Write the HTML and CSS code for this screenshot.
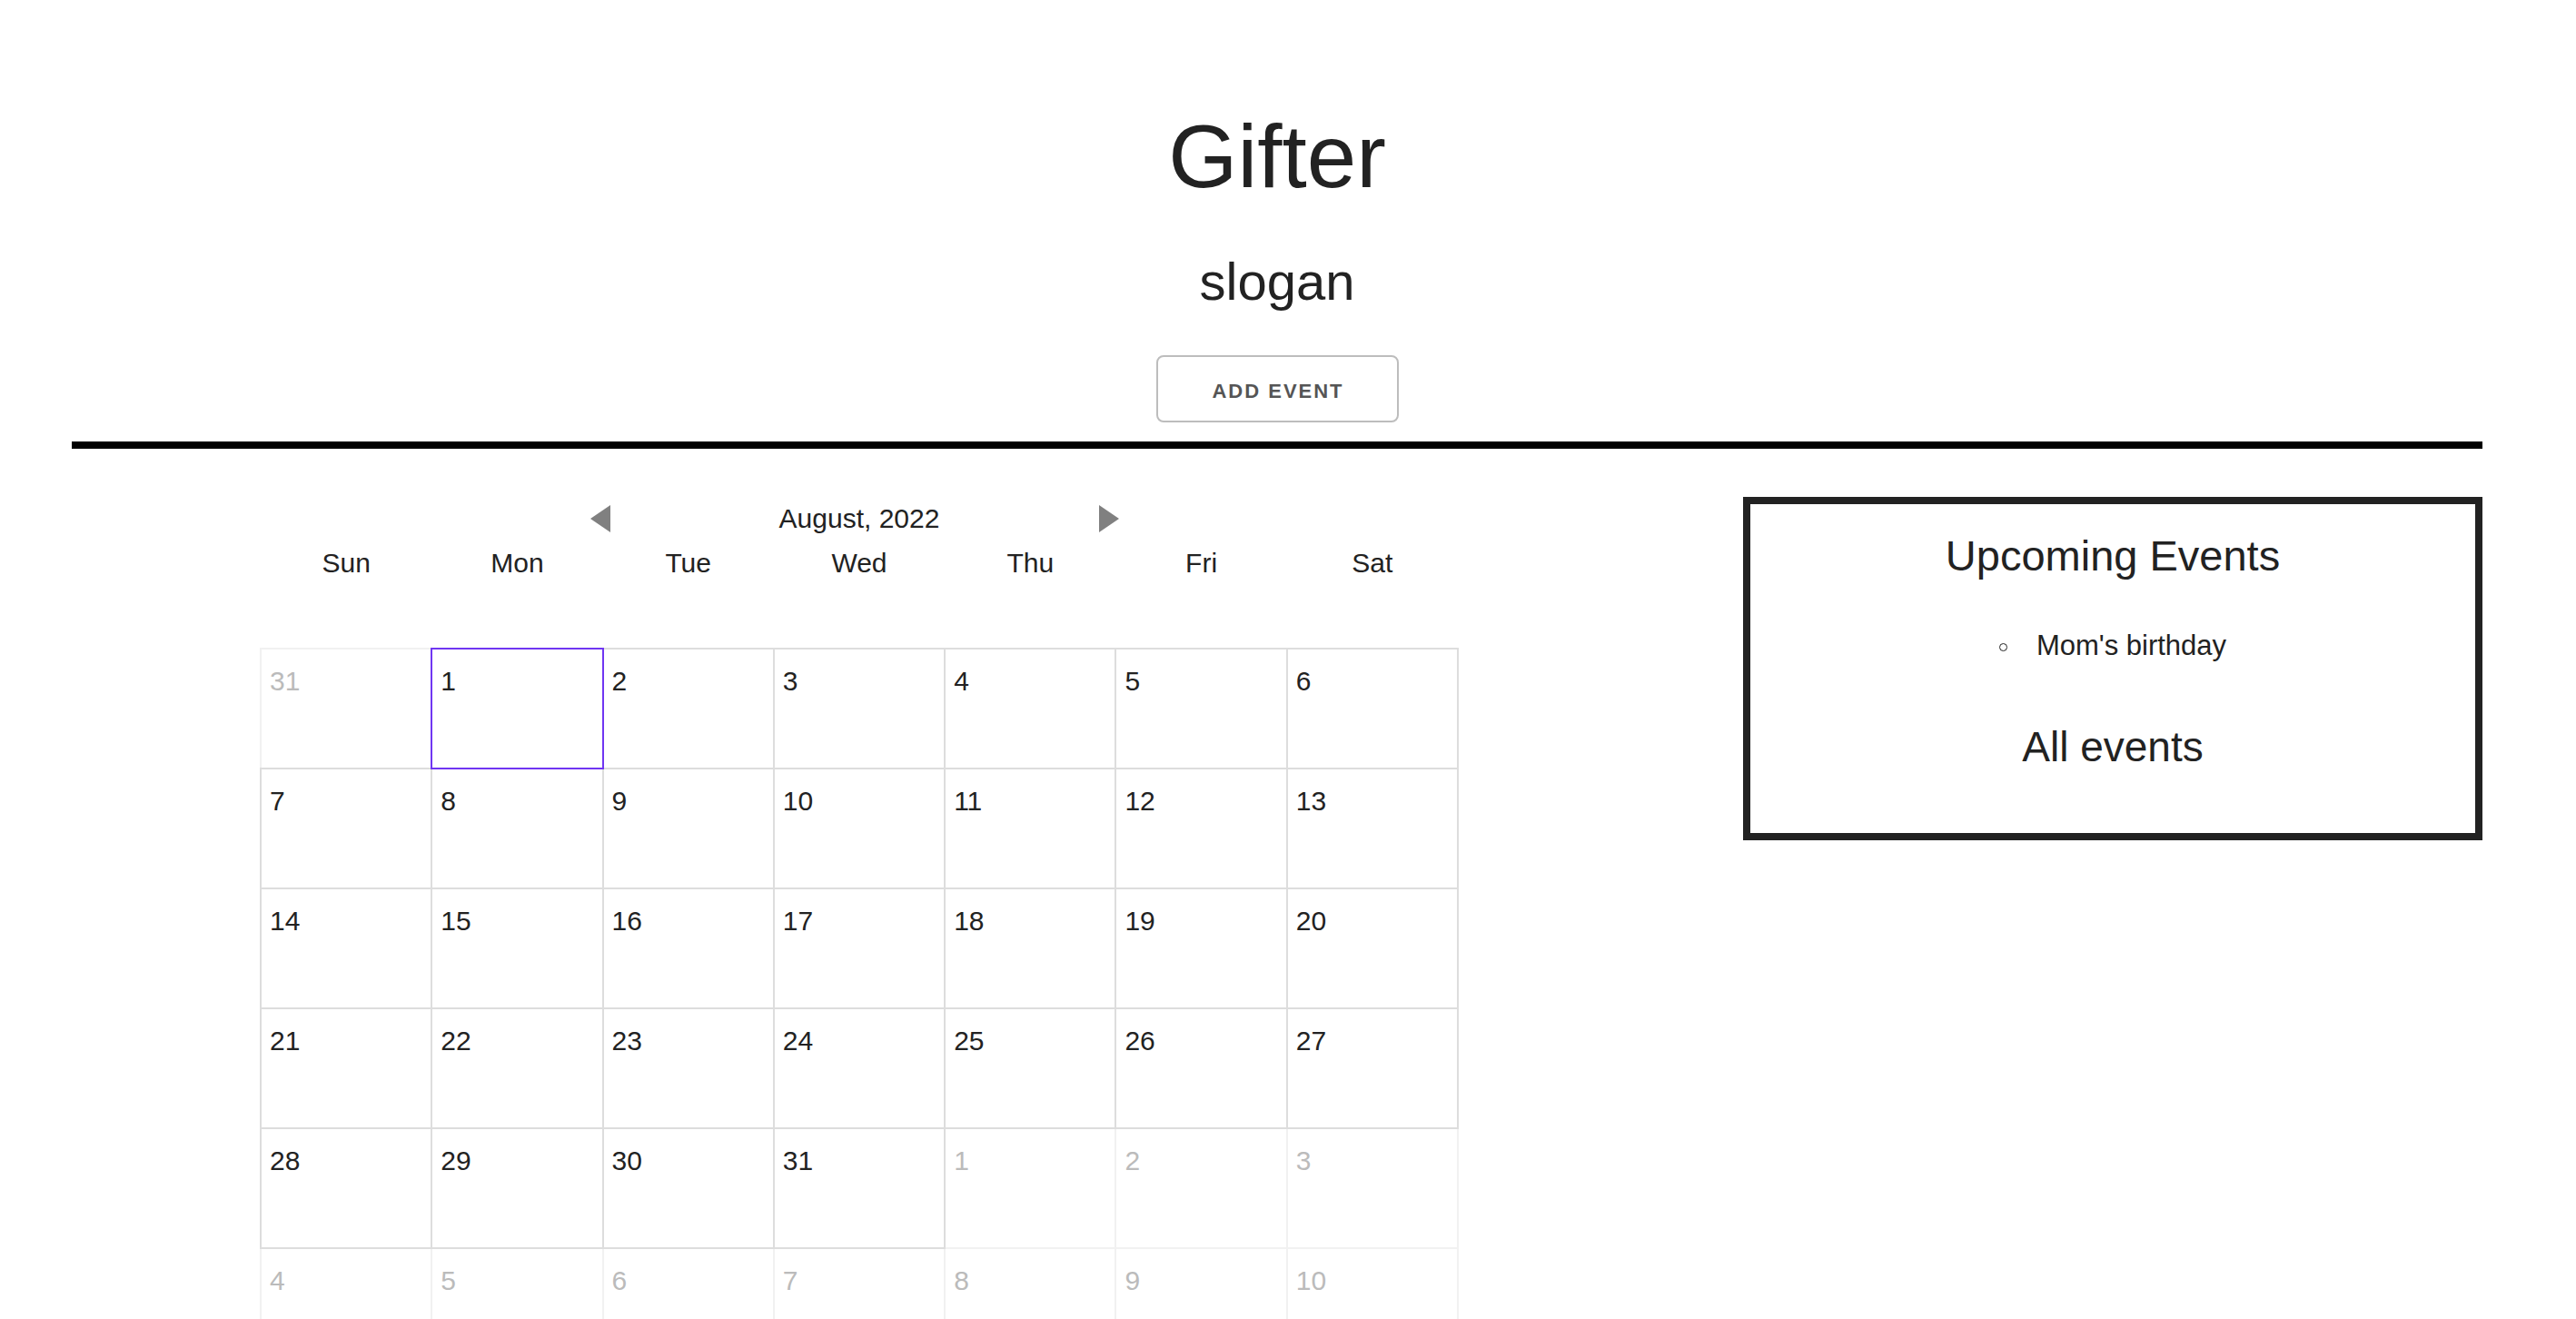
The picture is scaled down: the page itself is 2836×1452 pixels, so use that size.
FILE: index.html
```html
<!DOCTYPE html>
<html lang="en">
<head>
<meta charset="utf-8">
<title>Gifter</title>
<link rel="stylesheet" href="styles.css">
</head>
<body>
<div class="page">
  <header class="header">
    <h1 class="title">Gifter</h1>
    <h2 class="slogan">slogan</h2>
    <button class="add-btn" type="button">ADD EVENT</button>
  </header>
  <div class="rule"></div>
  <main class="main">
    <section class="calendar">
      <div class="cal-nav">
        <svg class="arrow" width="22" height="30" viewBox="0 0 22 30"><polygon points="22,0 22,30 0,15"/></svg>
        <span class="month">August, 2022</span>
        <svg class="arrow" width="22" height="30" viewBox="0 0 22 30"><polygon points="0,0 22,15 0,30"/></svg>
      </div>
      <div class="weekdays">
        <div>Sun</div><div>Mon</div><div>Tue</div><div>Wed</div><div>Thu</div><div>Fri</div><div>Sat</div>
      </div>
      <div class="grid">
        <div class="cell out">31</div>
        <div class="cell in selected">1</div>
        <div class="cell in">2</div>
        <div class="cell in">3</div>
        <div class="cell in">4</div>
        <div class="cell in">5</div>
        <div class="cell in">6</div>

        <div class="cell in">7</div>
        <div class="cell in">8</div>
        <div class="cell in">9</div>
        <div class="cell in">10</div>
        <div class="cell in">11</div>
        <div class="cell in">12</div>
        <div class="cell in">13</div>

        <div class="cell in">14</div>
        <div class="cell in">15</div>
        <div class="cell in">16</div>
        <div class="cell in">17</div>
        <div class="cell in">18</div>
        <div class="cell in">19</div>
        <div class="cell in">20</div>

        <div class="cell in">21</div>
        <div class="cell in">22</div>
        <div class="cell in">23</div>
        <div class="cell in">24</div>
        <div class="cell in">25</div>
        <div class="cell in">26</div>
        <div class="cell in">27</div>

        <div class="cell in">28</div>
        <div class="cell in">29</div>
        <div class="cell in">30</div>
        <div class="cell in">31</div>
        <div class="cell out">1</div>
        <div class="cell out">2</div>
        <div class="cell out">3</div>

        <div class="cell out">4</div>
        <div class="cell out">5</div>
        <div class="cell out">6</div>
        <div class="cell out">7</div>
        <div class="cell out">8</div>
        <div class="cell out">9</div>
        <div class="cell out">10</div>
      </div>
    </section>
    <aside class="events">
      <h2 class="events-title">Upcoming Events</h2>
      <ul class="events-list">
        <li class="event-item"><span class="bullet"></span><span>Mom's birthday</span></li>
      </ul>
      <h3 class="all-events">All events</h3>
    </aside>
  </main>
</div>
</body>
</html>
```

FILE: styles.css
```css
html, body {
  margin: 0;
  padding: 0;
  background: #ffffff;
}

body {
  font-family: "Liberation Sans", Arial, Helvetica, sans-serif;
  color: #222222;
}

.page {
  padding: 0 103px 0 79px;
  height: 1452px;
  overflow: hidden;
  box-sizing: border-box;
}

/* ---------- header ---------- */
.header {
  display: flex;
  flex-direction: column;
  align-items: center;
  padding-top: 114px;
}

.title {
  margin: 0;
  font-size: 98px;
  line-height: 116px;
  font-weight: 400;
  color: #222222;
}

.slogan {
  margin: 45px 0 0;
  font-size: 58px;
  line-height: 70px;
  font-weight: 400;
  color: #222222;
}

.add-btn {
  margin-top: 46px;
  width: 267px;
  height: 74px;
  box-sizing: border-box;
  padding: 25px 0 19px;
  border: 2px solid #bdbdbd;
  border-radius: 8px;
  background: #ffffff;
  font-family: "Liberation Sans", Arial, Helvetica, sans-serif;
  font-size: 22px;
  line-height: 26px;
  font-weight: 700;
  letter-spacing: 2px;
  color: #555555;
  text-indent: 2px;
}

.rule {
  margin-top: 21px;
  height: 8px;
  background: #000000;
}

/* ---------- main ---------- */
.main {
  display: flex;
  justify-content: space-between;
  align-items: flex-start;
}

.calendar {
  margin-left: 208px;
  width: 1318px;
}

.cal-nav {
  margin: 62px 0 0 363px;
  width: 582px;
  height: 30px;
  display: flex;
  justify-content: space-between;
  align-items: center;
}

.arrow {
  display: block;
  fill: #808080;
}

.month {
  padding-left: 10px;
  font-size: 30px;
  line-height: 30px;
  color: #222222;
}

.weekdays {
  margin-top: 17px;
  display: grid;
  grid-template-columns: repeat(7, 1fr);
  font-size: 30px;
  line-height: 34px;
  text-align: center;
  color: #222222;
}

.grid {
  margin-top: 77px;
  display: grid;
  grid-template-columns: repeat(7, 1fr);
  grid-auto-rows: 132px;
}

.cell {
  margin: -1px;
  border: 2px solid #f1f1f1;
  padding: 18px 9px;
  font-size: 30px;
  line-height: 34px;
  color: #bbbbbb;
}

.cell.in {
  position: relative;
  z-index: 1;
  border-color: #dddddd;
  color: #222222;
}

.cell.selected {
  z-index: 2;
  border-color: #7036f2;
}

/* ---------- events panel ---------- */
.events {
  margin-top: 53px;
  width: 814px;
  box-sizing: border-box;
  border: 8px solid #222222;
  padding: 29px 0 67px;
  text-align: center;
}

.events-title {
  margin: 0;
  font-size: 47px;
  line-height: 56px;
  font-weight: 400;
  color: #222222;
}

.events-list {
  margin: 54px 0 0;
  padding: 0;
  list-style: none;
}

.event-item {
  display: flex;
  justify-content: center;
  align-items: center;
  gap: 32px;
  font-size: 31px;
  line-height: 34px;
  color: #222222;
}

.bullet {
  margin-top: 3px;
  width: 9px;
  height: 9px;
  box-sizing: border-box;
  border: 1.5px solid #222222;
  border-radius: 50%;
}

.all-events {
  margin: 66px 0 0;
  font-size: 46px;
  line-height: 56px;
  font-weight: 400;
  color: #222222;
}
```
